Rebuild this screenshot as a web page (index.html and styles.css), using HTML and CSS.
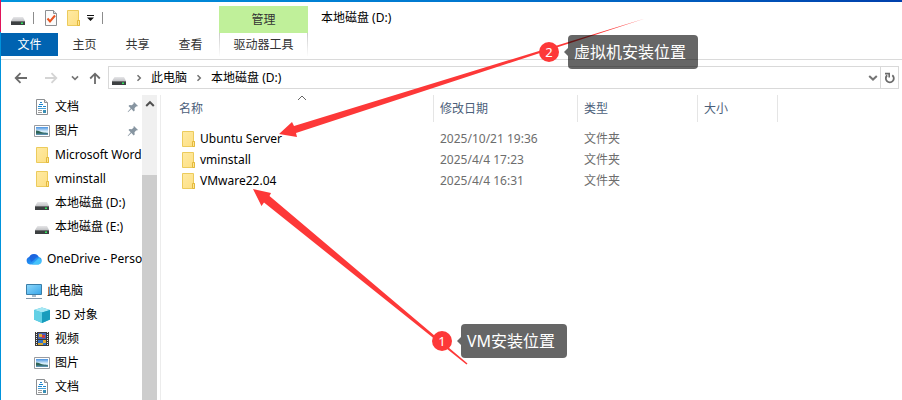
FILE: index.html
```html
<!DOCTYPE html>
<html lang="zh-CN">
<head>
    <meta charset="UTF-8">
    <meta name="viewport" content="width=device-width, initial-scale=1.0">
    <title>本地磁盘 (D:)</title>
    <link rel="stylesheet" href="styles.css">
</head>
<body>

<!-- Icone riutilizzate -->
<svg class="defs" aria-hidden="true">
    <defs>
        <linearGradient id="folderFill" x1="0" y1="0" x2="1" y2="1">
            <stop offset="0" stop-color="#ffeaa3"/>
            <stop offset="1" stop-color="#fddf82"/>
        </linearGradient>
        <linearGradient id="driveTop" x1="0" y1="0" x2="0" y2="1">
            <stop offset="0" stop-color="#e6e6e8"/>
            <stop offset="1" stop-color="#c2c3c6"/>
        </linearGradient>
        <linearGradient id="screenFill" x1="0" y1="0" x2="1" y2="1">
            <stop offset="0" stop-color="#8fd8fb"/>
            <stop offset="1" stop-color="#37a6ea"/>
        </linearGradient>
        <linearGradient id="skyFill" x1="0" y1="0" x2="0" y2="1">
            <stop offset="0" stop-color="#4a92e0"/>
            <stop offset="0.55" stop-color="#d9eefa"/>
            <stop offset="1" stop-color="#7fb0d4"/>
        </linearGradient>
        <linearGradient id="cloudFill" x1="0" y1="0" x2="1" y2="1">
            <stop offset="0" stop-color="#1c5fe0"/>
            <stop offset="0.5" stop-color="#1f8df2"/>
            <stop offset="1" stop-color="#4fc8fb"/>
        </linearGradient>
        <symbol id="folder" viewBox="0 0 16 16">
            <path d="M2.500.5h11v10h1v5h-12z" fill="url(#folderFill)" stroke="#eccb5c"/>
            <path d="M12.500 10.500h2v5h-2z" fill="#ffe694" stroke="#e3b93d"/>
        </symbol>
        <symbol id="drive" viewBox="0 0 16 16">
            <path d="M3.500 7h9.500L15 11H1z" fill="url(#driveTop)"/>
            <path d="M1 11h14v4H1z" fill="#3d4042"/>
            <path d="M1 11h14v1H1z" fill="#6d6f71"/>
            <path d="M11 12.500h2V14h-2z" fill="#2ee65a"/>
        </symbol>
        <symbol id="doc" viewBox="0 0 16 16">
            <path d="M2.500.5h8l3 3v12h-11z" fill="#fff" stroke="#8c8f92"/>
            <path d="M10.500.5v3h3" fill="#e4e4e4" stroke="#8c8f92"/>
            <path d="M6 3h2v1H6zM5 5h4v1H5zM4 7h4v1H4zM9 7h3v1H9z" fill="#1d86cf"/>
            <path d="M4 9h8v1H4z" fill="#4aa5de"/>
            <path d="M4 11h4v1H4zM4 13h4v1H4z" fill="#9b9b9b"/>
            <path d="M9 11h3v3H9z" fill="#3a8fb5"/>
        </symbol>
        <symbol id="picture" viewBox="0 0 16 16">
            <path d="M.5 2.500h15v11H.5z" fill="#fff" stroke="#989ba0"/>
            <path d="M2 4h12v8H2z" fill="url(#skyFill)"/>
            <path d="M2 7.500c3 0 4 1.600 7 2 2 .2 3.500.3 5 .8V12H2z" fill="#2f6557"/>
            <path d="M2 10.600h12V12H2z" fill="#5a8fae"/>
        </symbol>
        <symbol id="pin" viewBox="0 0 12 12">
            <path d="M7 1l4 4-1.200.5-.5-.2-1.800 1.900.2 2.200-1 1-2.300-2.300L1 11.200l-.3-.4 3-3.500L1.500 5l1-1 2.300.2L6.700 2.400 6.500 1.800z" fill="#8795a1"/>
        </symbol>
        <symbol id="chevron" viewBox="0 0 8 8">
            <path d="M2.500 1.200L5.300 4 2.500 6.800" fill="none" stroke="#707070" stroke-width="1.500"/>
        </symbol>
        <symbol id="chevronDown" viewBox="0 0 10 8">
            <path d="M1.200 2L5 5.600 8.800 2" fill="none" stroke="#757575" stroke-width="2"/>
        </symbol>
    </defs>
</svg>

<div class="window">
    <header class="ribbon">
        <div class="ribbon-left">
            <div class="quick-access">
                <svg class="icon"><use href="#drive"/></svg>
                <span class="divider"></span>
                <button class="quick-button" aria-label="属性">
                    <svg class="icon" viewBox="0 0 16 16">
                        <path d="M2.500.5h8l3 3v12h-11z" fill="#fbfbfb" stroke="#8c8f92"/>
                        <path d="M10.500.5v3h3" fill="#ddd" stroke="#8c8f92"/>
                        <path d="M4.500 8.500l2.500 3 5-6" fill="none" stroke="#ea5420" stroke-width="2"/>
                    </svg>
                </button>
                <button class="quick-button" aria-label="新建文件夹">
                    <svg class="icon"><use href="#folder"/></svg>
                </button>
                <button class="quick-button more" aria-label="自定义快速访问工具栏">
                    <svg class="more-icon" viewBox="0 0 7 6">
                        <path d="M0 0h7v1H0zM0 2.500h7L3.500 6z" fill="#111"/>
                    </svg>
                </button>
                <span class="divider"></span>
            </div>
            <div class="tabs">
                <button class="tab file">文件</button>
                <button class="tab">主页</button>
                <button class="tab">共享</button>
                <button class="tab">查看</button>
            </div>
        </div>
        <div class="context-tab">
            <div class="context-title">管理</div>
            <button class="context-button">驱动器工具</button>
        </div>
        <div class="title">本地磁盘 (D:)</div>
    </header>

    <nav class="navigation">
        <button class="nav-button" aria-label="返回">
            <svg class="arrow" viewBox="0 0 14 12"><path d="M13 6H2M6.500 1.200L1.700 6l4.800 4.800" fill="none" stroke="#6b6b6b" stroke-width="1.800"/></svg>
        </button>
        <button class="nav-button forward" aria-label="前进">
            <svg class="arrow" viewBox="0 0 14 12"><path d="M1 6h11M7.500 1.200L12.300 6l-4.800 4.800" fill="none" stroke="#d4d4d4" stroke-width="1.800"/></svg>
        </button>
        <button class="nav-button recent" aria-label="最近浏览的位置">
            <svg class="small-down"><use href="#chevronDown"/></svg>
        </button>
        <button class="nav-button up" aria-label="上移">
            <svg class="arrow-up" viewBox="0 0 12 12"><path d="M6 12V2M1.200 6.500L6 1.700l4.800 4.800" fill="none" stroke="#6b6b6b" stroke-width="1.800"/></svg>
        </button>
        <div class="address">
            <svg class="icon"><use href="#drive"/></svg>
            <svg class="crumb-arrow"><use href="#chevron"/></svg>
            <a class="crumb" href="#">此电脑</a>
            <svg class="crumb-arrow"><use href="#chevron"/></svg>
            <a class="crumb" href="#">本地磁盘 (D:)</a>
            <button class="address-button open" aria-label="以前的位置">
                <svg class="down"><use href="#chevronDown"/></svg>
            </button>
            <button class="address-button refresh" aria-label="刷新">
                <svg class="refresh-icon" viewBox="0 0 12 12">
                    <path d="M8.300 3.200A4 4 0 1 1 3.200 3.300" fill="none" stroke="#6b6b6b" stroke-width="1.800"/>
                    <path d="M1 1.600h4.200v4" fill="none" stroke="#6b6b6b" stroke-width="1.600"/>
                </svg>
            </button>
        </div>
    </nav>

    <div class="content">
        <aside class="sidebar">
            <div class="tree">
                <ul class="group">
                    <li class="item"><svg class="icon"><use href="#doc"/></svg><a href="#">文档</a><svg class="pin"><use href="#pin"/></svg></li>
                    <li class="item"><svg class="icon"><use href="#picture"/></svg><a href="#">图片</a><svg class="pin"><use href="#pin"/></svg></li>
                    <li class="item"><svg class="icon"><use href="#folder"/></svg><a href="#">Microsoft Word</a></li>
                    <li class="item"><svg class="icon"><use href="#folder"/></svg><a href="#">vminstall</a></li>
                    <li class="item"><svg class="icon"><use href="#drive"/></svg><a href="#">本地磁盘 (D:)</a></li>
                    <li class="item"><svg class="icon"><use href="#drive"/></svg><a href="#">本地磁盘 (E:)</a></li>
                </ul>
                <ul class="group">
                    <li class="item root">
                        <svg class="icon" viewBox="0 0 16 16">
                            <path d="M4 13.500a3.800 3.800 0 0 1-.7-7.400A5.200 5.200 0 0 1 12.700 6a3.800 3.800 0 0 1-.2 7.500z" fill="url(#cloudFill)"/>
                            <path d="M6 13.500l7-6.500a3.500 3.500 0 0 1-.5 6.500z" fill="#45c2fa"/>
                            <path d="M3.300 6.100A5.200 5.200 0 0 1 12.700 6C9 6 9 9.500 5 11z" fill="#1b55d6" opacity=".6"/>
                        </svg>
                        <a href="#">OneDrive - Personal</a>
                    </li>
                </ul>
                <ul class="group">
                    <li class="item root">
                        <svg class="icon" viewBox="0 0 16 16">
                            <path d="M.5 1.500h15v10H.5z" fill="url(#screenFill)" stroke="#3b7ea8"/>
                            <path d="M6 12h4v2H6z" fill="#a9bccb"/>
                            <path d="M0 15.500h16" stroke="#8296a8"/>
                        </svg>
                        <a href="#">此电脑</a>
                    </li>
                    <li class="item">
                        <svg class="icon" viewBox="0 0 16 16">
                            <path d="M0 3l8-2.500L16 3v9.500L8 16l-8-3.500z" fill="#35b8d6"/>
                            <path d="M0 3l8-2.500L16 3 8 5.500z" fill="#a6e8f4"/>
                            <path d="M0 3l8 2.500V16l-8-3.500z" fill="#62d0e5"/>
                            <path d="M8 5.500L16 3v9.500L8 16z" fill="#189cbc"/>
                        </svg>
                        <a href="#">3D 对象</a>
                    </li>
                    <li class="item">
                        <svg class="icon" viewBox="0 0 16 16">
                            <path d="M1 1h14v14H1z" fill="#3a3a3a"/>
                            <path d="M2.500 1v14M13.500 1v14" stroke="#eee" stroke-dasharray="1 1"/>
                            <path d="M4 2h8v6H4z" fill="#4564b8"/>
                            <path d="M4 9h8v5H4z" fill="#3173ca"/>
                            <path d="M5 3h3v3H5zM9 9h3v3H9z" fill="#e3ab2e"/>
                            <path d="M8 4h3v3H8z" fill="#c83c44"/>
                            <path d="M4 12h5v2H4z" fill="#d9a72d"/>
                        </svg>
                        <a href="#">视频</a>
                    </li>
                    <li class="item"><svg class="icon"><use href="#picture"/></svg><a href="#">图片</a></li>
                    <li class="item"><svg class="icon"><use href="#doc"/></svg><a href="#">文档</a></li>
                </ul>
            </div>
            <div class="scrollbar">
                <svg class="scroll-up" viewBox="0 0 10 8"><path d="M1.200 6L5 2.200 8.800 6" fill="none" stroke="#505050" stroke-width="2"/></svg>
                <div class="thumb"></div>
            </div>
        </aside>

        <main class="files">
            <table class="list">
                <colgroup>
                    <col class="col-name">
                    <col class="col-date">
                    <col class="col-type">
                    <col class="col-size">
                    <col>
                </colgroup>
                <thead>
                    <tr>
                        <th class="sorted">名称<svg class="sort" viewBox="0 0 10 6"><path d="M1 5l4-4 4 4" fill="none" stroke="#666"/></svg></th>
                        <th>修改日期</th>
                        <th>类型</th>
                        <th>大小</th>
                        <td></td>
                    </tr>
                </thead>
                <tbody>
                    <tr>
                        <td class="name"><svg class="icon"><use href="#folder"/></svg>Ubuntu Server</td>
                        <td>2025/10/21 19:36</td>
                        <td>文件夹</td>
                        <td></td>
                        <td></td>
                    </tr>
                    <tr>
                        <td class="name"><svg class="icon"><use href="#folder"/></svg>vminstall</td>
                        <td>2025/4/4 17:23</td>
                        <td>文件夹</td>
                        <td></td>
                        <td></td>
                    </tr>
                    <tr>
                        <td class="name"><svg class="icon"><use href="#folder"/></svg>VMware22.04</td>
                        <td>2025/4/4 16:31</td>
                        <td>文件夹</td>
                        <td></td>
                        <td></td>
                    </tr>
                </tbody>
            </table>
        </main>
    </div>
</div>

<!-- Frecce e note sopra la finestra -->
<svg class="arrows" width="902" height="400" viewBox="0 0 902 400">
    <path d="M279 134L292 122 294 126 645 18.500 296 133 297 137z" fill="#fd3838"/>
    <path d="M253 189L271 193 269.500 196 467.500 363.500 466.500 364.500 264 202.500 261.500 206z" fill="#fd3838"/>
</svg>
<div class="note note-two">
    <span class="number">2</span>
    <span class="note-text">虚拟机安装位置</span>
</div>
<div class="note note-one">
    <span class="number">1</span>
    <span class="note-text">VM安装位置</span>
</div>

</body>
</html>
```

FILE: styles.css
```css
* {
    box-sizing: border-box;
}

body {
    margin: 0;
    position: relative;
    height: 100vh;
    overflow: hidden;
    font-family: "Noto Sans", "Noto Sans CJK SC", sans-serif;
    font-size: 12px;
    line-height: 16px;
    color: #000;
    background:
        linear-gradient(#e0145a, #e0145a) 0 0 / 1px 32px no-repeat,
        linear-gradient(to right, #0093dc, #0078d0 50%, #0040ac);
}

button {
    font: inherit;
    color: inherit;
    padding: 0;
    border: none;
    background: none;
}

a {
    color: inherit;
    text-decoration: none;
}

svg {
    display: block;
    flex: none;
}

.defs {
    position: absolute;
    width: 0;
    height: 0;
}

.icon {
    width: 16px;
    height: 16px;
}

.window {
    display: flex;
    flex-direction: column;
    height: 100vh;
    border-top: 2px solid transparent;
    border-left: 1px solid transparent;
    background: #fff;
    background-clip: padding-box;
}

/* Barra superiore */
.ribbon {
    display: flex;
    height: 58px;
    border-bottom: 1px solid #dadada;
}

.ribbon-left {
    width: 218px;
}

.quick-access {
    display: flex;
    align-items: center;
    height: 31px;
    padding-left: 9px;
}

.divider {
    width: 1px;
    height: 12px;
    margin: 0 9px 0 7px;
    background: #8c8c8c;
}

.quick-button {
    margin-right: 6px;
}

.more {
    margin: 0 1px 0 0;
}

.more-icon {
    width: 7px;
    height: 6px;
}

.tabs {
    display: flex;
    height: 23px;
}

.tab {
    width: 53px;
    color: #333;
}

.file {
    width: 57px;
    color: #fff;
    background: #0063b1;
}

.context-tab {
    display: flex;
    flex-direction: column;
    width: 89px;
    padding-top: 4px;
    color: #333;
}

.context-title {
    height: 27px;
    line-height: 27px;
    text-align: center;
    background: #c0f09a;
}

.context-button {
    height: 23px;
    border: solid;
    border-width: 0 1px;
    border-image: linear-gradient(#c8c8c8, #fff) 1;
}

.title {
    padding: 8px 13px;
}

/* Barra degli indirizzi */
.navigation {
    display: flex;
    align-items: center;
    height: 35px;
    padding: 0 3px 0 13px;
}

.nav-button {
    margin-right: 16px;
}

.arrow {
    width: 14px;
    height: 12px;
}

.forward {
    margin-right: 13px;
}

.recent {
    margin-right: 10px;
}

.small-down {
    width: 8px;
    height: 8px;
}

.up {
    margin-right: 7px;
}

.arrow-up {
    width: 12px;
    height: 12px;
}

.address {
    display: flex;
    flex: 1;
    align-items: center;
    height: 23px;
    padding-left: 2px;
    border: 1px solid #d9d9d9;
}

.crumb-arrow {
    width: 8px;
    height: 8px;
    margin: 0 8px;
}

.open {
    margin-left: auto;
    padding: 0 2px;
}

.down {
    width: 10px;
    height: 8px;
}

.refresh {
    display: flex;
    align-items: center;
    justify-content: center;
    width: 18px;
    height: 21px;
    border-left: 1px solid #d9d9d9;
}

.refresh-icon {
    width: 12px;
    height: 12px;
}

/* Albero a sinistra */
.content {
    display: flex;
    flex: 1;
    min-height: 0;
}

.sidebar {
    display: flex;
    width: 160px;
    padding-right: 3px;
    border-right: 1px solid #ececec;
}

.tree {
    flex: 1;
    min-width: 0;
    overflow: hidden;
}

.group {
    margin: 0 0 8px;
    padding: 0;
    list-style: none;
}

.item {
    display: flex;
    align-items: center;
    gap: 5px;
    height: 24px;
    padding-left: 33px;
    white-space: nowrap;
}

.root {
    padding-left: 25px;
}

.pin {
    width: 12px;
    height: 12px;
    margin: 0 3px 0 auto;
}

.scrollbar {
    display: flex;
    flex-direction: column;
    align-items: center;
    width: 15px;
    padding-top: 5px;
    background: #f0f0f0;
}

.scroll-up {
    width: 10px;
    height: 8px;
}

.thumb {
    flex: 1;
    width: 15px;
    margin-top: 67px;
    background: #cdcdcd;
}

/* Elenco dei file */
.files {
    flex: 1;
}

.list {
    width: 100%;
    table-layout: fixed;
    border-collapse: separate;
    border-spacing: 0;
    color: #6d6d6d;
}

.col-name {
    width: 273px;
}

.col-date {
    width: 144px;
}

.col-type {
    width: 120px;
}

.col-size {
    width: 80px;
}

.list th {
    height: 27px;
    padding: 0 6px;
    font-weight: normal;
    text-align: left;
    color: #4c607a;
    border-right: 1px solid #e5e5e5;
}

.list .sorted {
    position: relative;
    padding-left: 18px;
}

.sort {
    position: absolute;
    top: 0;
    left: 50%;
    width: 10px;
    height: 6px;
}

.list td {
    height: 21px;
    padding: 0 6px;
}

tbody::before {
    content: "";
    display: block;
    height: 6px;
}

.list .name {
    display: flex;
    align-items: center;
    gap: 4px;
    padding-left: 19px;
    color: #000;
}

/* Note */
.arrows {
    position: absolute;
    top: 0;
    left: 0;
}

.note {
    position: absolute;
    display: flex;
    align-items: center;
    gap: 9px;
}

.note-two {
    top: 35px;
    left: 539px;
}

.note-one {
    top: 324px;
    left: 432px;
}

.number {
    width: 20px;
    height: 20px;
    border-radius: 50%;
    font-size: 13px;
    line-height: 20px;
    text-align: center;
    color: #fff;
    background: #fd3838;
}

.note-text {
    position: relative;
    padding: 5px 12px 5px 6px;
    border-radius: 4px;
    font-size: 16px;
    line-height: 24px;
    color: #fff;
    background: rgba(0, 0, 0, 0.6);
}

.note-text::before {
    content: "";
    position: absolute;
    top: 13px;
    left: -4px;
    border: solid transparent;
    border-width: 4px 4px 4px 0;
    border-right-color: rgba(0, 0, 0, 0.6);
}
```
